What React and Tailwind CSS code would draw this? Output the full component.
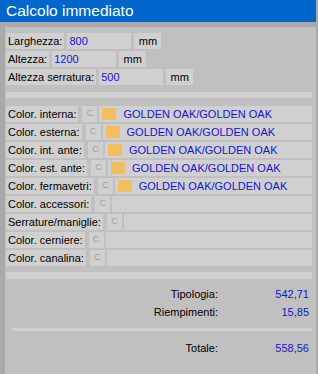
import React from "react";

const font = "font-['Liberation_Sans','Arial',sans-serif]";

function TopRow({ label, value }) {
  return (
    <div className="flex h-[16px] gap-[3px] mb-[2px]">
      <div className="bg-[#d0d0d0] px-[2px] leading-[16px] text-black">{label}</div>
      <div className="bg-[#d0d0d0] w-[64px] pl-[2px] leading-[16px] text-[#1414d2]">{value}</div>
      <div className="bg-[#d0d0d0] w-[27px] text-center leading-[16px] text-black">mm</div>
    </div>
  );
}

function ColorRow({ label, value }) {
  return (
    <div className="flex h-[16px] mb-[2px]">
      <div className="bg-[#d0d0d0] px-[2px] leading-[16px] text-black">{label}</div>
      <div className="bg-[#d0d0d0] w-[15px] ml-[4px] flex items-center justify-center text-[9px] text-[#a0a0a0]">C</div>
      <div className="bg-[#d0d0d0] flex-1 ml-[2px] flex items-center pl-[3px]">
        {value && (
          <>
            <div className="w-[14px] h-[12px] bg-[#f1bf5f] mr-[7px]" />
            <span className="leading-[16px] text-[#1414d2]">{value}</span>
          </>
        )}
      </div>
    </div>
  );
}

export default function App() {
  const gold = "GOLDEN OAK/GOLDEN OAK";
  return (
    <div className={`w-[318px] h-[374px] bg-[#a9a9a9] flex flex-col pr-[2px] text-[11px] ${font}`}>
      <div className="h-[22px] bg-[#0066cc] text-white text-[15.5px] pl-[6px] leading-[22px]">Calcolo immediato</div>
      <div className="flex-1 pl-[5px] pt-[5px] flex">
        <div className="flex-1 bg-[#c0c0c0] pl-[1px] pr-[4px] pt-[6px] flex flex-col">
          <TopRow label="Larghezza:" value="800" />
          <TopRow label="Altezza:" value="1200" />
          <TopRow label="Altezza serratura:" value="500" />
          <div className="mt-[5px] h-[6px] bg-[#d0d0d0] mb-[8px]" />
          <ColorRow label="Color. interna:" value={gold} />
          <ColorRow label="Color. esterna:" value={gold} />
          <ColorRow label="Color. int. ante:" value={gold} />
          <ColorRow label="Color. est. ante:" value={gold} />
          <ColorRow label="Color. fermavetri:" value={gold} />
          <ColorRow label="Color. accessori:" />
          <ColorRow label="Serrature/maniglie:" />
          <ColorRow label="Color. cerniere:" />
          <ColorRow label="Color. canalina:" />
          <div className="mt-[4px] h-[7px] bg-[#d0d0d0]" />
          <div className="grid grid-cols-[212px_91px] gap-y-[2px] pt-[7px]">
            <div className="text-right leading-[16px] text-black">Tipologia:</div>
            <div className="text-right leading-[16px] text-[#1414d2]">542,71</div>
            <div className="text-right leading-[16px] text-black">Riempimenti:</div>
            <div className="text-right leading-[16px] text-[#1414d2]">15,85</div>
          </div>
          <div className="ml-[6px] mt-[8px] h-[3px] bg-[#d0d0d0]" />
          <div className="grid grid-cols-[212px_91px] pt-[9px]">
            <div className="text-right leading-[16px] text-black">Totale:</div>
            <div className="text-right leading-[16px] text-[#1414d2]">558,56</div>
          </div>
        </div>
      </div>
    </div>
  );
}
